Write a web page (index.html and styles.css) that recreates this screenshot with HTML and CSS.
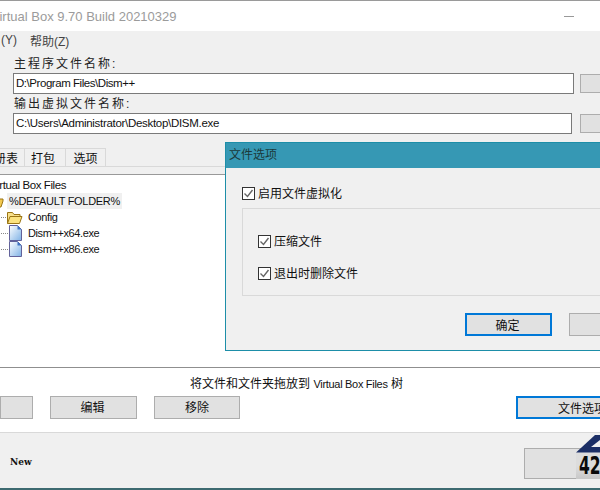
FILE: index.html
```html
<!DOCTYPE html>
<html lang="zh">
<head>
<meta charset="utf-8">
<title>Virtual Box</title>
<link rel="stylesheet" href="styles.css">
</head>
<body>
<div class="window">
  <header class="titlebar">
    <span class="title">Virtual Box 9.70 Build 20210329</span>
    <span class="minimize"></span>
  </header>
  <nav class="menu"><span class="menu-a">(Y)</span><span class="menu-b">帮助(Z)</span></nav>
  <section class="fields">
    <div class="label">主程序文件名称:</div>
    <div class="field-row">
      <div class="input input-one">D:\Program Files\Dism++</div>
      <div class="browse"></div>
    </div>
    <div class="label label-two">输出虚拟文件名称:</div>
    <div class="field-row field-two">
      <div class="input input-two">C:\Users\Administrator\Desktop\DISM.exe</div>
      <div class="browse"></div>
    </div>
  </section>
  <div class="tabs">
    <span class="tab tab-first">册表</span>
    <span class="tab tab-second">打包</span>
    <span class="tab">选项</span>
  </div>
  <div class="tab-gap"></div>
  <section class="tree">
    <div class="node node-root">Virtual Box Files</div>
    <div class="node node-default">
      <svg class="folder-closed" width="16" height="16" viewBox="0 0 16 16"><path d="M1 5h5l1 1h4v2l-2 6H1z" fill="#f3c94f" stroke="#9a7414"/></svg>
      <span class="selected">%DEFAULT FOLDER%</span>
    </div>
    <div class="node node-child">
      <span class="dots"></span>
      <svg class="icon icon-folder" width="17" height="15" viewBox="0 0 17 15"><path d="M1.500 13.500V2.500h5l1.500 2h6v2" fill="#f8e08a" stroke="#9a7414"/><path d="M1.500 13.500l2.500-7h12l-2.500 7z" fill="#fbe27e" stroke="#9a7414"/></svg>
      <span>Config</span>
    </div>
    <div class="node node-child">
      <span class="dots"></span>
      <svg class="icon" width="17" height="16" viewBox="0 0 17 16"><defs><linearGradient id="paper" x1="0" y1="0" x2="1" y2="1"><stop offset="0" stop-color="#ffffff"/><stop offset="1" stop-color="#7fb2e6"/></linearGradient></defs><path d="M2.500.5h8l4 4v11h-12z" fill="url(#paper)" stroke="#62629a"/><path d="M10.500.5v4h4z" fill="#3f74c4"/></svg>
      <span>Dism++x64.exe</span>
    </div>
    <div class="node node-child">
      <span class="dots"></span>
      <svg class="icon" width="17" height="16" viewBox="0 0 17 16"><path d="M2.500.5h8l4 4v11h-12z" fill="url(#paper)" stroke="#62629a"/><path d="M10.500.5v4h4z" fill="#3f74c4"/></svg>
      <span>Dism++x86.exe</span>
    </div>
  </section>
  <section class="actions">
    <div class="hint">将文件和文件夹拖放到 <span class="hint-latin">Virtual Box Files</span> 树</div>
    <div class="action-row">
      <button class="btn btn-add"></button>
      <button class="btn btn-edit">编辑</button>
      <button class="btn btn-remove">移除</button>
      <button class="btn btn-options">文件选项</button>
    </div>
  </section>
  <footer class="footer">
    <span class="new">New</span>
    <button class="btn btn-big"></button>
  </footer>

  <div class="logo">
    <svg class="logo-mark" width="24" height="19" viewBox="0 0 24 19"><path d="M0 18.500L19 1h5v17.500z" fill="#1c2f66"/><path d="M15 13l9-7v7z" fill="#f0f0f0"/></svg>
    <div class="logo-plate"><span class="logo-text">426</span></div>
  </div>

  <div class="dialog">
    <div class="dialog-title">文件选项</div>
    <div class="dialog-body">
      <label class="check check-top"><span class="box"><svg width="11" height="11" viewBox="0 0 11 11"><path d="M1.500 5.500l3 3 5-6.500" fill="none" stroke="#666" stroke-width="1.400"/></svg></span><span class="check-text">启用文件虚拟化</span></label>
      <div class="group">
        <label class="check"><span class="box"><svg width="11" height="11" viewBox="0 0 11 11"><path d="M1.500 5.500l3 3 5-6.500" fill="none" stroke="#666" stroke-width="1.400"/></svg></span><span class="check-text">压缩文件</span></label>
        <label class="check"><span class="box"><svg width="11" height="11" viewBox="0 0 11 11"><path d="M1.500 5.500l3 3 5-6.500" fill="none" stroke="#666" stroke-width="1.400"/></svg></span><span class="check-text">退出时删除文件</span></label>
      </div>
      <div class="dialog-buttons">
        <button class="btn btn-ok">确定</button>
        <button class="btn btn-cancel"></button>
      </div>
    </div>
  </div>
</div>
</body>
</html>
```
FILE: styles.css
```css
* { box-sizing: border-box; }
html, body { margin: 0; padding: 0; }
body {
  width: 600px;
  height: 490px;
  overflow: hidden;
  font-family: "Liberation Sans", "Noto Sans CJK SC", sans-serif;
  font-size: 12px;
  color: #111;
  background: #fff;
}
.window {
  position: relative;
  width: 600px;
  height: 490px;
  overflow: hidden;
  display: flex;
  flex-direction: column;
  background: #f0f0f0;
  border-top: 1px solid #9a9a9a;
  border-bottom: 2px solid #3d6a70;
}
.titlebar {
  height: 30px;
  flex: none;
  background: #fff;
  display: flex;
  align-items: center;
  justify-content: space-between;
  padding-right: 26px;
}
.title {
  margin-left: -9px;
  font-size: 13px;
  color: #9b9b9b;
  white-space: nowrap;
}
.minimize { width: 10px; height: 1px; background: #999; margin-top: 1px; }
.menu {
  height: 20px;
  flex: none;
  display: flex;
  align-items: center;
  padding-bottom: 2px;
  color: #444;
  font-size: 12px;
}
.menu-a { margin-left: 1px; }
.menu-b { margin-left: 13px; }
.fields { padding-left: 13px; flex: none; }
.label {
  height: 22px;
  padding: 5px 0 0 1px;
  font-size: 12px;
  line-height: 16px;
  letter-spacing: 2px;
  color: #222;
}
.label-two { height: 19px; padding-top: 2px; }
.field-row { display: flex; align-items: center; height: 21px; }
.input {
  height: 21px;
  flex: none;
  background: #fff;
  border: 1px solid #7a7a7a;
  padding-left: 2px;
  font-size: 11.500px;
  line-height: 19px;
  letter-spacing: -0.450px;
  color: #111;
  white-space: nowrap;
}
.input-one { width: 561px; }
.input-two { width: 559px; letter-spacing: -0.300px; }
.browse {
  flex: none;
  width: 40px;
  height: 19px;
  margin-left: 6px;
  background: #e1e1e1;
  border: 1px solid #adadad;
}
.field-two .browse { margin-left: 8px; }
.tabs {
  flex: none;
  display: flex;
  height: 19px;
  margin-top: 14px;
  border-bottom: 1px solid #d9d9d9;
}
.tab {
  width: 41px;
  height: 18px;
  border: 1px solid #d9d9d9;
  border-left: 0;
  border-bottom: 0;
  text-align: center;
  font-size: 12px;
  line-height: 21px;
  color: #111;
}
.tab:last-child { width: 40px; }
.tab-first { width: 25px; direction: rtl; overflow: hidden; white-space: nowrap; padding-right: 6px; }
.tab-second { padding-right: 4px; }
.tab-gap { height: 7px; flex: none; }
.tree {
  flex: none;
  height: 194px;
  background: #fff;
  border-top: 1px solid #999;
  border-bottom: 1px solid #8f8f8f;
  padding-top: 2px;
  font-size: 11px;
  letter-spacing: -0.400px;
}
.node {
  height: 16px;
  display: flex;
  align-items: center;
  white-space: nowrap;
}
.node-root { margin-left: -10px; font-size: 11.500px; letter-spacing: -0.400px; }
.folder-closed { flex: none; margin-left: -8px; }
.selected {
  background: #f0f0f0;
  height: 16px;
  line-height: 16px;
  padding: 0 2px;
  margin-left: -1px;
  letter-spacing: -0.300px;
  font-size: 11px;
}
.node-child { padding-left: 1px; }
.dots {
  width: 7px;
  border-top: 1px dotted #888;
  flex: none;
}
.icon { flex: none; margin-right: 4px; margin-left: -1px; }
.icon-folder { margin-left: -2px; margin-right: 5px; }
.actions { flex: none; height: 64px; background: #fff; }
.hint {
  height: 28px;
  padding-top: 8px;
  text-align: center;
  margin-left: -7px;
  line-height: 16px;
  font-size: 12px;
}
.hint-latin { font-size: 11px; letter-spacing: -0.300px; }
.action-row { display: flex; height: 23px; }
.btn {
  height: 23px;
  padding: 1px 0 0;
  background: #e1e1e1;
  border: 1px solid #adadad;
  font-family: inherit;
  font-size: 12px;
  line-height: 20px;
  color: #111;
  flex: none;
}
.btn-add { width: 33px; }
.btn-edit { width: 87px; margin-left: 17px; padding-right: 2px; }
.btn-remove { width: 86px; margin-left: 17px; }
.btn-options {
  width: 100px;
  margin-left: 276px;
  border: 2px solid #0078d7;
  text-align: left;
  padding-left: 40px;
  white-space: nowrap;
  overflow: hidden;
}
.footer {
  flex: 1;
  position: relative;
  display: flex;
  align-items: flex-start;
  border-top: 1px solid #d9d9d9;
}
.new {
  margin: 23px 0 0 10px;
  font-family: "DejaVu Serif", serif;
  font-weight: bold;
  font-size: 9px;
  line-height: 12px;
  color: #111;
}
.btn-big {
  position: absolute;
  left: 524px;
  top: 15px;
  width: 100px;
  height: 31px;
}
.logo {
  position: absolute;
  left: 576px;
  top: 433px;
  width: 24px;
  height: 45px;
  overflow: hidden;
}
.logo-mark { display: block; }
.logo-plate {
  height: 26px;
  padding: 3px 0 0 3px;
  background: linear-gradient(#dcdcdc 50%, #c8c8c8);
}
.logo-text {
  display: block;
  font-family: "DejaVu Sans Condensed", "DejaVu Sans", sans-serif;
  font-weight: bold;
  font-size: 15px;
  line-height: 13px;
  color: #0b0b0b;
  white-space: nowrap;
  transform: scale(1.150, 1.600);
  transform-origin: left top;
}
.dialog {
  position: absolute;
  left: 225px;
  top: 141px;
  width: 400px;
  height: 209px;
  background: #f0f0f0;
  border: 1px solid #1d8ea8;
  display: flex;
  flex-direction: column;
}
.dialog-title {
  height: 25px;
  flex: none;
  background: #3698b4;
  padding-left: 3px;
  font-size: 12px;
  line-height: 24px;
  color: #1c3a3a;
}
.dialog-body { padding: 18px 0 0 16px; }
.check {
  display: flex;
  align-items: center;
  height: 14px;
  gap: 3px;
  font-size: 12px;
  line-height: 14px;
  white-space: nowrap;
}
.check-text { padding-top: 2px; }
.box {
  flex: none;
  width: 13px;
  height: 13px;
  background: #fff;
  border: 1px solid #333;
  display: flex;
  align-items: center;
  justify-content: center;
}
.group {
  margin-top: 8px;
  height: 88px;
  width: 400px;
  border: 1px solid #d9d9d9;
  padding: 25px 0 0 15px;
  display: flex;
  flex-direction: column;
  gap: 18px;
}
.dialog-buttons { display: flex; margin: 17px 0 0 223px; gap: 17px; }
.btn-ok { width: 87px; border: 2px solid #0078d7; padding-right: 2px; }
.btn-cancel { width: 87px; }
```
